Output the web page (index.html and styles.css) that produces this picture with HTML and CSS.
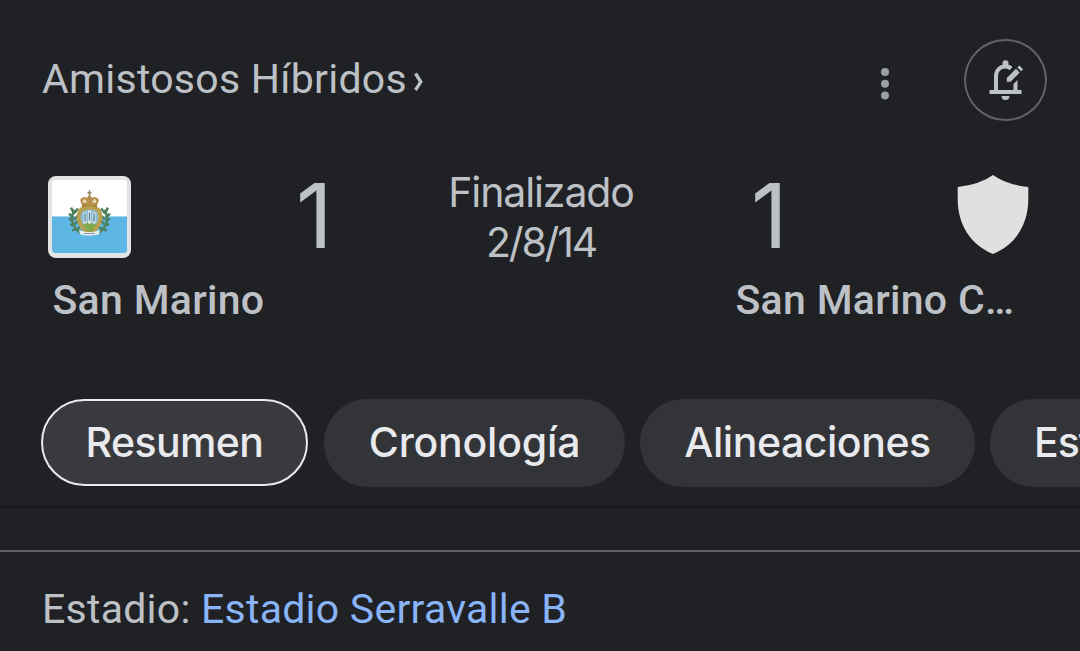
FILE: index.html
```html
<!DOCTYPE html>
<html lang="es">
<head>
    <meta charset="UTF-8">
    <meta name="viewport" content="width=device-width, initial-scale=1.0">
    <title>San Marino - Amistosos Híbridos</title>
    <link rel="stylesheet" href="styles.css">
</head>
<body>
    <header class="top">
        <a class="league" href="#"><span class="league-name">Amistosos Híbridos</span><svg class="chevron" width="12" height="20" viewBox="0 0 12 20"><path d="M1.500 1.500L6.800 9.800L1.500 18" fill="none" stroke="currentColor" stroke-width="3.300"/></svg></a>
        <button class="more" aria-label="Más opciones">
            <svg width="10" height="34" viewBox="0 0 10 34" fill="currentColor">
                <circle cx="5" cy="5" r="4"/>
                <circle cx="5" cy="16.8" r="4"/>
                <circle cx="5" cy="28.6" r="4"/>
            </svg>
        </button>
        <button class="notify" aria-label="Notificaciones">
            <svg width="36" height="42" viewBox="0 0 36 42">
                <path d="M8 32V17.5C8 11 12 7.6 17.5 7.6Q21 7.6 23 9" fill="none" stroke="currentColor" stroke-width="4"/>
                <path d="M14.500 7V4.200a3 3 0 0 1 6 0V6l4 2l-3 3zM1.500 31h32v4h-32zM25.500 25l4-4v11h-4zM13.500 37h8a4 4 0 0 1-8 0z" fill="currentColor"/>
                <path d="M18.8 19L28 9.800L31.700 13.500L22.5 22.8H18.8zM29.300 8.500L31.300 6.500L35.200 10.300L33.100 12.300z" fill="currentColor"/>
            </svg>
        </button>
    </header>

    <main class="match">
        <div class="crest home-crest">
            <svg class="flag" width="83" height="82" viewBox="0 0 83 83" preserveAspectRatio="none">
                <rect width="83" height="83" rx="8" fill="#e2e3e5"/>
                <path d="M7 4h69q3 0 3 3v34H4V7q0-3 3-3z" fill="#fff"/>
                <path d="M4 41h75v34q0 3-3 3H7q-3 0-3-3z" fill="#5eb6e4"/>
                <!-- laurel branches -->
                <g fill="none" stroke="#4d7f5c" stroke-width="2.400">
                    <path d="M26 34Q20 49 33 58M57 34Q63 49 50 58"/>
                    <path d="M26 38l-3-6M25 42l-4-4M25 46l-4-3M26 50l-4-1M28 54l-4 1M26 38l4-5M26 44l4-4M27 49l3-4M30 54l2-3M57 38l3-6M58 42l4-4M58 46l4-3M57 50l4-1M55 54l4 1M57 38l-4-5M57 44l-4-4M56 49l-3-4M53 54l-2-3"/>
                </g>
                <!-- crown -->
                <path d="M34.500 31l-2.500-7q3-4 7-2l2.500-3l2.500 3q4-2 7 2l-2.500 7z" fill="#b5904a"/>
                <path d="M35 27q-1-3 1-3.500t3 3.500zM44 27q1-4 3-3.500t1 3.500z" fill="#ead9b7"/>
                <path d="M41.500 14.500v6M39.500 17h4" stroke="#96825a" stroke-width="1.500"/>
                <path d="M34 31h15" stroke="#8a6830" stroke-width="2"/>
                <!-- shield with the three towers -->
                <path d="M33 34q8.500-4 17 0q4 6 1.500 12q-2 8-10 11q-8-3-10-11q-2.500-6 1.500-12z" fill="#8dbbd0" stroke="#b8a04f" stroke-width="4"/>
                <path d="M35 49q6-4 13 0q-2 6-6.500 8q-4.500-2-6.500-8z" fill="#83a94e"/>
                <path d="M37 37v11M41.500 35v13M46 37v11" stroke="#dbe7eb" stroke-width="3"/>
                <path d="M37 38v8M41.500 37v8M46 38v8" stroke="#4d81a0" stroke-width="1.300"/>
                <path d="M31 55l4 1q6 2 13 0l4-1l-1 4q-10 3-19 0z" fill="#edf0f0"/>
                <path d="M36 58q6 1 11 0" fill="none" stroke="#8793a5"/>
            </svg>
        </div>
        <div class="score home-score">1</div>
        <div class="status">
            <div class="state">Finalizado</div>
            <div class="date">2/8/14</div>
        </div>
        <div class="score away-score">1</div>
        <div class="crest away-crest">
            <svg width="72" height="80" viewBox="0 0 72 80"><path d="M36 0Q49 9.500 71.300 12V24C71.300 50 58 70 36 79C14 70 .7 50 .7 24V12Q23 9.500 36 0z" fill="#e0e0e0"/></svg>
        </div>
        <div class="team home-team">San Marino</div>
        <div class="team away-team">San Marino C…</div>
    </main>

    <nav class="tabs">
        <a class="tab active" href="#">Resumen</a>
        <a class="tab cronologia" href="#">Cronología</a>
        <a class="tab alineaciones" href="#">Alineaciones</a>
        <a class="tab estadisticas" href="#">Estadísticas</a>
    </nav>

    <section class="venue">
        <span class="label">Estadio:</span> <a class="venue-link" href="#">Estadio Serravalle B</a>
    </section>
</body>
</html>
```
FILE: styles.css
```css
* {
    box-sizing: border-box;
}

body {
    margin: 0;
    height: 651px;
    overflow: hidden;
    background-color: #202125;
    color: #bdc1c6;
    font-family: Roboto, sans-serif;
    font-size: 41px;
}

a {
    color: inherit;
    text-decoration: none;
}

button {
    padding: 0;
    border: none;
    background: none;
    color: inherit;
}

svg {
    display: block;
}

.top {
    display: flex;
    align-items: center;
    height: 121px;
    padding: 39px 33px 0 42px;
}

.league {
    display: flex;
    align-items: center;
    flex: 1;
    line-height: 48px;
    padding-bottom: 2px;
}

.league-name {
    letter-spacing: 0.27px;
}

.chevron {
    margin: 5px 0 0 7px;
}

.more {
    width: 10px;
    margin: 7px 74px 0 0;
    color: #9aa0a6;
}

.notify {
    display: flex;
    align-items: center;
    justify-content: center;
    width: 83px;
    height: 82px;
    border: 2px solid #5f6368;
    border-radius: 50%;
}

.match {
    display: grid;
    grid-template-columns: 180px 270px 182px 270px 178px;
    grid-template-rows: 109px 50px;
    height: 233px;
    padding-top: 45px;
}

.home-crest {
    padding: 10px 0 0 48px;
}

.away-crest {
    padding: 9px 0 0 55px;
}

.score {
    font-family: Inter, sans-serif;
    font-size: 90px;
    line-height: 100px;
}

.home-score {
    padding-left: 116px;
}

.away-score {
    padding-left: 119px;
}

.status {
    justify-self: center;
    font-family: Inter, sans-serif;
    line-height: 50px;
    padding-top: 1px;
    text-align: center;
    white-space: nowrap;
}

.state {
    letter-spacing: -1.1px;
}

.date {
    letter-spacing: -2.2px;
}

.team {
    font-weight: 500;
    line-height: 50px;
    white-space: nowrap;
    letter-spacing: 0.3px;
}

.home-team {
    grid-column: 1 / 3;
    padding-left: 52.5px;
}

.away-team {
    grid-column: 4 / 6;
    padding-left: 103.5px;
}

.tabs {
    display: flex;
    gap: 15px;
    height: 154px;
    padding: 45px 0 0 41px;
    overflow: hidden;
    border-bottom: 2px solid #17181b;
}

.tab {
    display: flex;
    flex-shrink: 0;
    align-items: center;
    justify-content: center;
    height: 88px;
    padding-bottom: 3px;
    border-radius: 44px;
    background-color: #333438;
    color: #e8eaed;
    font-family: Inter, sans-serif;
    font-weight: 500;
}

.active {
    width: 267px;
    height: 87px;
    margin-right: 1px;
    padding-bottom: 1px;
    border: 2px solid #e8eaed;
    background-color: #393a3e;
    letter-spacing: -0.6px;
}

.cronologia {
    width: 301px;
    letter-spacing: -0.2px;
}

.alineaciones {
    width: 335px;
    letter-spacing: -0.45px;
}

.estadisticas {
    width: 334px;
    justify-content: flex-start;
    padding-left: 44px;
    letter-spacing: -1px;
}

.venue {
    margin-top: 42px;
    padding: 33px 42px 0;
    border-top: 2px solid #5f6368;
    line-height: 48px;
    letter-spacing: 0.25px;
}

.venue-link {
    color: #8ab4f8;
}
```
